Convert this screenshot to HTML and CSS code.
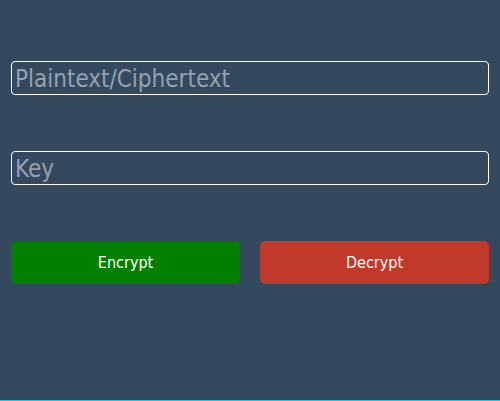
FILE: index.html
```html
<!DOCTYPE html>
<html>
<head>
<meta charset="utf-8">
<link rel="stylesheet" href="styles.css">
</head>
<body>
<div class="app">
  <div class="row"><input class="field" type="text" placeholder="Plaintext/Ciphertext"></div>
  <div class="row"><input class="field" type="text" placeholder="Key"></div>
  <div class="row buttons">
    <button class="btn encrypt">Encrypt</button>
    <button class="btn decrypt">Decrypt</button>
  </div>
</div>
</body>
</html>
```
FILE: styles.css
```css
html, body {
  margin: 0;
  padding: 0;
  height: 100%;
}
body {
  background: #34495e;
  font-family: "DejaVu Sans Condensed", "DejaVu Sans", sans-serif;
  box-sizing: border-box;
  border-bottom: 1px solid #1bc5dc;
}
.app {
  display: flex;
  flex-direction: column;
  padding: 61px 11px 0 11px;
  gap: 56px;
}
.row {
  display: flex;
}
.field {
  flex: 1;
  height: 34px;
  box-sizing: border-box;
  margin: 0;
  background: transparent;
  border: 1px solid #ffffff;
  border-radius: 4px;
  padding: 2px 2px 0 3px;
  font-family: "DejaVu Sans Condensed", "DejaVu Sans", sans-serif;
  font-size: 24px;
  color: #ffffff;
  outline: none;
}
.field::placeholder {
  color: #95a1ad;
}
.buttons {
  gap: 20px;
}
.btn {
  flex: 1;
  height: 43px;
  border: none;
  border-radius: 5px;
  color: #ffffff;
  font-family: "DejaVu Sans Condensed", "DejaVu Sans", sans-serif;
  font-size: 16px;
  margin: 0;
  padding: 0;
}
.encrypt {
  background: #008000;
}
.decrypt {
  background: #c0392b;
}
```
